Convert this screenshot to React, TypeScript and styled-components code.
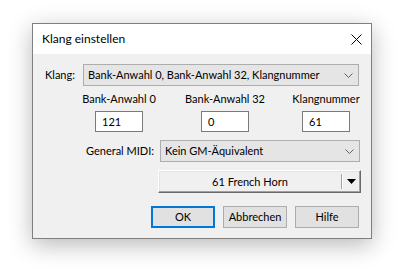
import React from 'react';
import styled, { createGlobalStyle } from 'styled-components';

const GlobalStyle = createGlobalStyle`
    html, body {
        margin: 0;
        padding: 0;
        background: #ffffff;
    }
    body {
        font-family: Lato, "Liberation Sans", sans-serif;
        font-size: 11px;
        color: #000000;
    }
`;

const Page = styled.div`
    padding: 23px 0 0 32px;
    width: 412px;
    height: 269px;
    box-sizing: border-box;
`;

const Dialog = styled.div`
    width: 340px;
    box-sizing: border-box;
    border: 1px solid #7f7f7f;
    background: #f0f0f0;
    box-shadow: 0 6px 22px rgba(0, 0, 0, 0.28);
`;

const TitleBar = styled.div`
    height: 30px;
    background: #ffffff;
    display: flex;
    align-items: center;
    justify-content: space-between;
    padding: 0 9px 0 9px;
`;

const Title = styled.span`
    font-size: 12px;
    line-height: 16px;
`;

const CloseButton = styled.div`
    width: 12px;
    height: 12px;
    display: flex;
    align-items: center;
    justify-content: center;
`;

const Body = styled.div`
    padding: 10px 11px 10px 12px;
    display: flex;
    flex-direction: column;
`;

const Row = styled.div<{ $indent?: number; $top?: number }>`
    display: flex;
    align-items: center;
    margin-left: ${({ $indent }) => $indent ?? 0}px;
    margin-top: ${({ $top }) => $top ?? 0}px;
`;

const Label = styled.span<{ $width?: number }>`
    width: ${({ $width }) => ($width ? `${$width}px` : 'auto')};
    white-space: nowrap;
    line-height: 16px;
`;

const SideLabel = styled.span`
    white-space: nowrap;
    line-height: 16px;
    margin-right: 6px;
`;

const Combo = styled.div<{ $width: number }>`
    width: ${({ $width }) => $width}px;
    height: 22px;
    box-sizing: border-box;
    border: 1px solid #adadad;
    background: #e5e5e5;
    display: flex;
    align-items: center;
    justify-content: space-between;
    padding: 0 5px 0 4px;
`;

const ComboText = styled.span`
    white-space: nowrap;
    line-height: 16px;
`;

const FieldGrid = styled.div`
    display: grid;
    grid-template-columns: 106px 106px 96px;
    margin-left: 21px;
    margin-top: 5px;
`;

const Field = styled.div`
    display: flex;
    flex-direction: column;
    align-items: center;
    gap: 4px;
`;

const NumberBox = styled.div<{ $width: number }>`
    width: ${({ $width }) => $width}px;
    height: 21px;
    box-sizing: border-box;
    border: 1px solid #7a7a7a;
    background: #ffffff;
    padding: 0 6px;
    display: flex;
    align-items: center;
    line-height: 16px;
`;

const SplitButton = styled.div`
    width: 203px;
    height: 23px;
    box-sizing: border-box;
    background: #f0f0f0;
    border-top: 1px solid #ffffff;
    border-left: 1px solid #ffffff;
    border-right: 1px solid #696969;
    border-bottom: 1px solid #696969;
    box-shadow: inset -1px -1px 0 #a0a0a0, inset 1px 1px 0 #e3e3e3;
    display: flex;
    align-items: center;
    margin-left: 113px;
    margin-top: 8px;
`;

const SplitLabel = styled.span`
    flex: 1;
    text-align: center;
    line-height: 16px;
`;

const SplitDivider = styled.div`
    width: 2px;
    height: 15px;
    border-left: 1px solid #a0a0a0;
    border-right: 1px solid #ffffff;
    box-sizing: border-box;
`;

const SplitArrow = styled.div`
    width: 17px;
    display: flex;
    align-items: center;
    justify-content: center;
`;

const ButtonRow = styled.div`
    display: flex;
    justify-content: flex-end;
    gap: 8px;
    margin-top: 13px;
    padding-right: 1px;
`;

const DialogButton = styled.button<{ $primary?: boolean }>`
    width: 64px;
    height: 22px;
    box-sizing: border-box;
    font-family: inherit;
    font-size: 11px;
    color: #000000;
    background: #e1e1e1;
    border: ${({ $primary }) => ($primary ? '2px solid #0078d7' : '1px solid #adadad')};
    padding: 0;
    margin: 0;
    line-height: 16px;
`;

const Chevron: React.FC = () => (
    <svg width="9" height="5" viewBox="0 0 9 5">
        <path d="M0.5 0.5 L4.5 4.5 L8.5 0.5" fill="none" stroke="#606060" strokeWidth="1" />
    </svg>
);

const App: React.FC = () => {
    return (
        <>
            <GlobalStyle />
            <Page>
                <Dialog>
                    <TitleBar>
                        <Title>Klang einstellen</Title>
                        <CloseButton>
                            <svg width="11" height="11" viewBox="0 0 11 11">
                                <path d="M0.5 0.5 L10.5 10.5 M10.5 0.5 L0.5 10.5" stroke="#000" strokeWidth="1" />
                            </svg>
                        </CloseButton>
                    </TitleBar>
                    <Body>
                        <Row>
                            <Label $width={38}>Klang:</Label>
                            <Combo $width={276}>
                                <ComboText>Bank-Anwahl 0, Bank-Anwahl 32, Klangnummer</ComboText>
                                <Chevron />
                            </Combo>
                        </Row>
                        <FieldGrid>
                            <Field>
                                <Label>Bank-Anwahl 0</Label>
                                <NumberBox $width={48}>121</NumberBox>
                            </Field>
                            <Field>
                                <Label>Bank-Anwahl 32</Label>
                                <NumberBox $width={48}>0</NumberBox>
                            </Field>
                            <Field>
                                <Label>Klangnummer</Label>
                                <NumberBox $width={48}>61</NumberBox>
                            </Field>
                        </FieldGrid>
                        <Row $indent={41} $top={8}>
                            <SideLabel>General MIDI:</SideLabel>
                            <Combo $width={202}>
                                <ComboText>Kein GM-Äquivalent</ComboText>
                                <Chevron />
                            </Combo>
                        </Row>
                        <SplitButton>
                            <SplitLabel>61 French Horn</SplitLabel>
                            <SplitDivider />
                            <SplitArrow>
                                <svg width="9" height="5" viewBox="0 0 9 5">
                                    <path d="M0 0 L9 0 L4.5 5 Z" fill="#000" />
                                </svg>
                            </SplitArrow>
                        </SplitButton>
                        <ButtonRow>
                            <DialogButton $primary>OK</DialogButton>
                            <DialogButton>Abbrechen</DialogButton>
                            <DialogButton>Hilfe</DialogButton>
                        </ButtonRow>
                    </Body>
                </Dialog>
            </Page>
        </>
    );
};

export default App;
